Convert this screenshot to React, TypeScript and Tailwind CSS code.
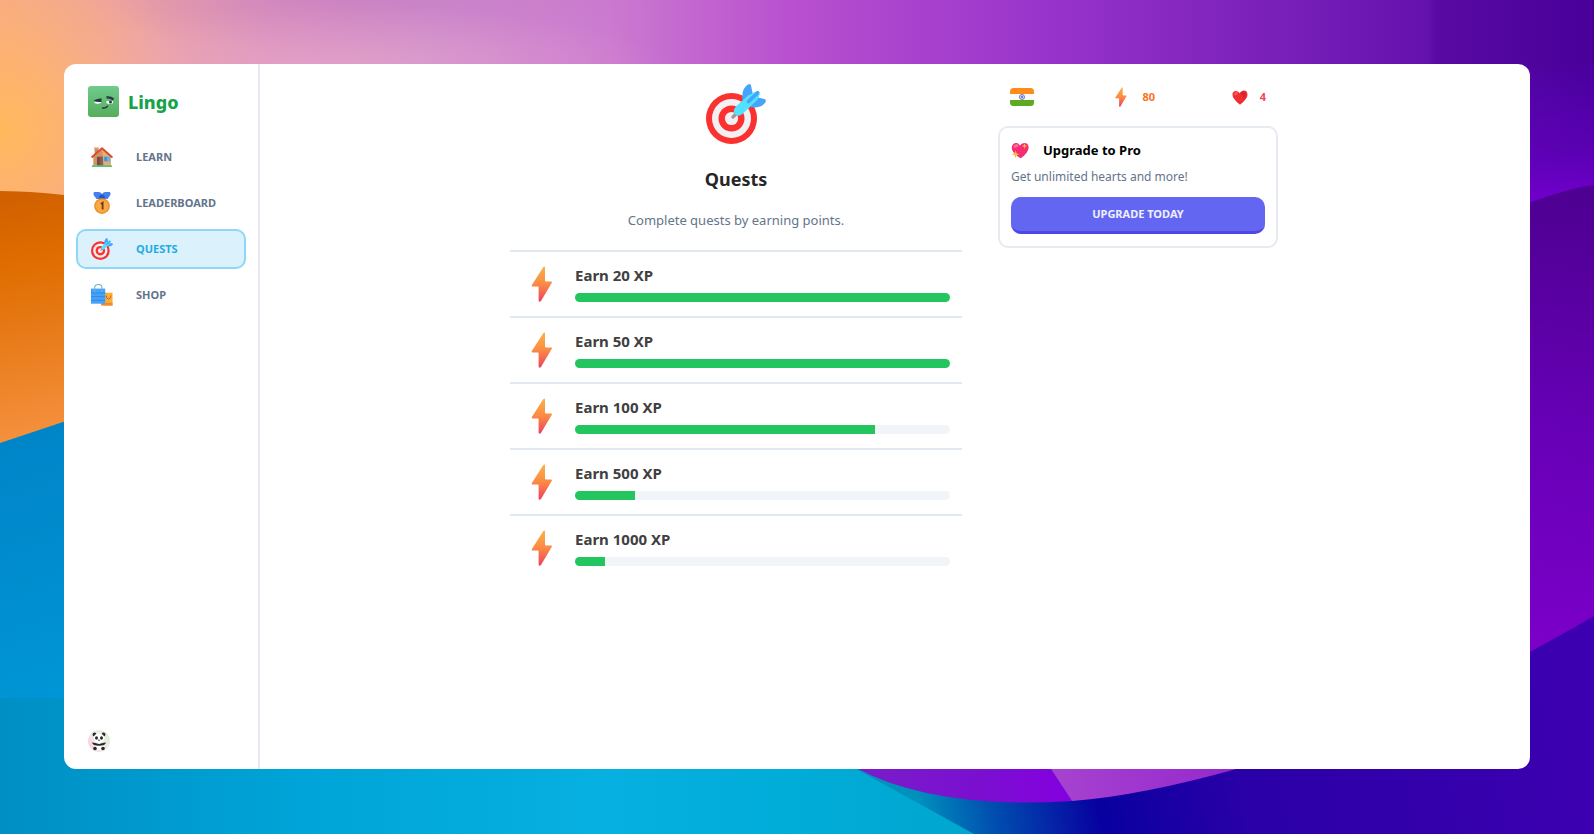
import React, { useId } from "react";

type IconProps = { className?: string };

function Wallpaper() {
  return (
    <svg
      className="absolute inset-0 h-full w-full"
      viewBox="0 0 1594 834"
      preserveAspectRatio="none"
      aria-hidden="true"
    >
      <defs>
        <linearGradient id="sky" x1="0" x2="1">
          <stop offset="0" stopColor="#f8aa80" />
          <stop offset=".08" stopColor="#eda4a0" />
          <stop offset=".17" stopColor="#dc94bd" />
          <stop offset=".27" stopColor="#d08fcb" />
          <stop offset=".38" stopColor="#cc7bd0" />
          <stop offset=".5" stopColor="#b84fcf" />
          <stop offset=".66" stopColor="#9733cb" />
          <stop offset=".8" stopColor="#7920b9" />
          <stop offset=".896" stopColor="#6511ae" />
          <stop offset=".9" stopColor="#5a0aa3" />
          <stop offset="1" stopColor="#48009a" />
        </linearGradient>
        <radialGradient id="glow" gradientUnits="userSpaceOnUse" cx="0" cy="130" r="200">
          <stop offset="0" stopColor="#ffb95c" />
          <stop offset=".35" stopColor="#ffb56a" stopOpacity=".75" />
          <stop offset="1" stopColor="#f8b090" stopOpacity="0" />
        </radialGradient>
        <radialGradient id="mauve" gradientUnits="userSpaceOnUse" cx="0" cy="0" r="1" gradientTransform="translate(360 -10) scale(300 65)">
          <stop offset="0" stopColor="#b868c0" stopOpacity=".4" />
          <stop offset="1" stopColor="#b868c0" stopOpacity="0" />
        </radialGradient>
        <radialGradient id="blush" gradientUnits="userSpaceOnUse" cx="0" cy="0" r="1" gradientTransform="translate(340 75) scale(340 70)">
          <stop offset="0" stopColor="#eeb0d0" stopOpacity=".45" />
          <stop offset="1" stopColor="#eeb0d0" stopOpacity="0" />
        </radialGradient>
        <linearGradient id="orange" gradientUnits="userSpaceOnUse" x1="0" y1="190" x2="50" y2="440">
          <stop offset="0" stopColor="#cf5f00" />
          <stop offset=".3" stopColor="#df6d00" />
          <stop offset="1" stopColor="#f5913f" />
        </linearGradient>
        <linearGradient id="blue" gradientUnits="userSpaceOnUse" x1="0" y1="450" x2="80" y2="700">
          <stop offset="0" stopColor="#0085c9" />
          <stop offset="1" stopColor="#0096d5" />
        </linearGradient>
        <linearGradient id="cyan" x1="0" x2="1">
          <stop offset="0" stopColor="#008fc4" />
          <stop offset=".3" stopColor="#00a4d8" />
          <stop offset=".6" stopColor="#06b0e0" />
          <stop offset=".8" stopColor="#00acd8" />
          <stop offset="1" stopColor="#00a5cc" />
        </linearGradient>
        <linearGradient id="dusk" gradientUnits="userSpaceOnUse" x1="0" y1="60" x2="0" y2="205">
          <stop offset="0" stopColor="#6400cf" stopOpacity="0" />
          <stop offset=".6" stopColor="#6400c0" stopOpacity=".6" />
          <stop offset="1" stopColor="#7300d0" />
        </linearGradient>
        <linearGradient id="violet" gradientUnits="userSpaceOnUse" x1="1594" y1="200" x2="1520" y2="640">
          <stop offset="0" stopColor="#4e0092" />
          <stop offset=".55" stopColor="#6800b8" />
          <stop offset="1" stopColor="#7b00c8" />
        </linearGradient>
        <linearGradient id="indigo" gradientUnits="userSpaceOnUse" x1="890" y1="860" x2="1594" y2="740">
          <stop offset=".05" stopColor="#0092bd" />
          <stop offset=".15" stopColor="#0050b0" />
          <stop offset=".3" stopColor="#0800a0" />
          <stop offset=".5" stopColor="#2a00a8" />
          <stop offset="1" stopColor="#3d00b0" />
        </linearGradient>
        <linearGradient id="petal" x1="0" x2="1">
          <stop offset="0" stopColor="#7820c8" />
          <stop offset=".6" stopColor="#7b0fd0" />
          <stop offset="1" stopColor="#8400e0" />
        </linearGradient>
        <linearGradient id="petalLight" x1="0" x2="1">
          <stop offset="0" stopColor="#a843d0" />
          <stop offset="1" stopColor="#9428cc" />
        </linearGradient>
      </defs>
      <rect width="1594" height="834" fill="url(#sky)" />
      <rect width="700" height="140" fill="url(#mauve)" />
      <rect width="700" height="140" fill="url(#blush)" />
      <rect width="300" height="240" fill="url(#glow)" />
      <path d="M1500 60H1594V250H1500Z" fill="url(#dusk)" />
      <path d="M0 191Q36 191 90 198V450H0Z" fill="url(#orange)" />
      <path d="M0 443Q30 433 90 413V834H0Z" fill="url(#blue)" />
      <path d="M0 698H90V760H1000V834H0Z" fill="url(#cyan)" />
      <path d="M1500 213Q1570 187 1594 185V700H1500Z" fill="url(#violet)" />
      <path d="M1500 668Q1560 636 1594 616V834H974L840 760H1500Z" fill="url(#indigo)" />
      <path d="M856 768Q935 810 1072 801L1045 760H840Z" fill="url(#petal)" />
      <path d="M1045 760L1072 801Q1140 796 1240 768V760Z" fill="url(#petalLight)" />
    </svg>
  );
}

function Bolt({ className }: IconProps) {
  const id = useId();
  return (
    <svg className={className} viewBox="0 0 36 36" aria-hidden="true">
      <defs>
        <linearGradient id={id} x1="0" y1="0" x2="0" y2="1">
          <stop offset="0" stopColor="#f9b146" />
          <stop offset=".5" stopColor="#fb8a45" />
          <stop offset="1" stopColor="#ee3f62" />
        </linearGradient>
      </defs>
      <path
        d="M19.200 1.200Q21-.2 21 1.400V14.600Q21 15.400 21.800 15.400H27Q28.600 15.400 27.800 16.800L17 35Q15.200 36.600 14.600 34.800V21.400Q14.600 20.400 13.600 20.400H8.600Q7.200 20.400 7.900 19Z"
        fill={`url(#${id})`}
      />
    </svg>
  );
}

function Target({ className }: IconProps) {
  return (
    <svg className={className} viewBox="0 0 60 60" aria-hidden="true">
      <circle cx="25.500" cy="34.500" r="25.500" fill="#fa312f" />
      <circle cx="25.500" cy="34.500" r="19.500" fill="#f3eff3" />
      <circle cx="25.500" cy="34.500" r="13" fill="#fa312f" />
      <circle cx="25.500" cy="34.500" r="6.600" fill="#f3eff3" />
      <path d="M27 33L32 28" stroke="#9b9b9b" strokeWidth="3.400" strokeLinecap="round" />
      <path d="M36.500 16C35.500 8 38 3 42 .5Q44-.6 45 1.500L47 11L37 21Z" fill="#46a4fb" />
      <path d="M44 23C52 24.500 57 22 59.600 18Q60.500 16 58.500 15L50 13Z" fill="#46a4fb" />
      <path d="M42 11.500L49 8Q54 5.500 53.800 9.500Q53 15 48 19L37 29.500Q32 33.500 29.500 30.500C26.500 27.500 28 25 30 22.500Z" fill="#50e2ff" />
      <path d="M42.500 17.500L51.500 9" stroke="#46a4fb" strokeWidth="3.600" strokeLinecap="round" />
    </svg>
  );
}

function House({ className }: IconProps) {
  return (
    <svg className={className} viewBox="0 0 24 24" aria-hidden="true">
      <path d="M4 2h4v9H4z" fill="#c98a55" />
      <path d="M3.500 1.500h5v2h-5z" fill="#e0a56a" />
      <path d="M2.500 11.500L12 3l9.500 8.500V21.500h-19z" fill="#cf9565" />
      <path d="M12 4l9.500 8v9.500H14z" fill="#e5ad78" />
      <path d="M6.500 11.800h6.500v9.800H6.500z" fill="#794b45" />
      <path d="M10 11.800h3v9.800h-3z" fill="#926052" />
      <path d="M14.500 11.800h5.500v4.800h-5.500z" fill="#2697e5" />
      <path d="M17.300 11.800H20v4.800h-2.700z" fill="#51bdf4" />
      <path d="M1.200 12L12 2.500 22.800 12" fill="none" stroke="#dc4931" strokeWidth="2" strokeLinecap="round" strokeLinejoin="round" />
      <path d="M1 21h22v2H1z" fill="#5bc374" />
    </svg>
  );
}

function Medal({ className }: IconProps) {
  return (
    <svg className={className} viewBox="0 0 24 24" aria-hidden="true">
      <path d="M3.500 0h5q2 0 3.500 2.200Q13.500 0 15.500 0h5q1.500 1.200.5 3.500L18 7.500H6L3 3.500Q2 1 3.500 0z" fill="#4580ee" />
      <path d="M8.500 5l3.500-2.500 3.500 2.500-1 3h-5z" fill="#2857c4" />
      <circle cx="12" cy="15.300" r="8.600" fill="#e9912f" />
      <circle cx="12" cy="15.300" r="7" fill="#fba83c" />
      <path d="M10.700 13l2-1.300v7.300" fill="none" stroke="#6d3a31" strokeWidth="2" />
    </svg>
  );
}

function Bags({ className }: IconProps) {
  return (
    <svg className={className} viewBox="0 0 24 24" aria-hidden="true">
      <path d="M13 9.500h10.500V23.500H13z" fill="#fbae36" />
      <path d="M11 20.500h12.500v3H11z" fill="#ee8b32" />
      <path d="M16.500 12.500q.5 4 2.500 4t3-4" fill="none" stroke="#a75c3e" strokeWidth=".9" />
      <path d="M0 5h15.500v16.500H0z" fill="#45a4fa" />
      <path d="M0 9.800h15.500M0 13.800h15.500M0 17.800h15.500" stroke="#2f85e8" strokeWidth="1" />
      <path d="M4 9V4.500q0-4 4-4t4 4V9" fill="none" stroke="#6fb4d2" strokeWidth="1.200" />
    </svg>
  );
}

function Heart({ className }: IconProps) {
  return (
    <svg className={className} viewBox="0 0 24 24" aria-hidden="true">
      <path d="M12 23.500Q1 15 .7 8.500C.5 2 8 1 11.500 6.500 15 0 23.500 1 23.300 8.500Q23 15 12 23.500z" fill="#f02f33" />
      <path d="M12 7.500Q16 2.500 19.500 4.500 23 9 17 17q2-7-5-9.500z" fill="#cf1e2b" opacity=".6" />
      <ellipse cx="6" cy="7" rx="3" ry="2" fill="#fb5c52" transform="rotate(-30 6 7)" />
    </svg>
  );
}

function SparkleHeart({ className }: IconProps) {
  return (
    <svg className={className} viewBox="0 0 24 24" aria-hidden="true">
      <path d="M13 23Q1 16 1 9C1 2 9 .5 12 6 16 .5 24 2 23.500 9Q23 16 13 23z" fill="#f52d70" />
      <ellipse cx="6.500" cy="6.500" rx="3.500" ry="2.200" fill="#fc6ba5" transform="rotate(-25 6.500 6.500)" />
      <path d="M18 3l1 2.800 2.800 1-2.800 1L18 10.600l-1-2.800-2.800-1 2.800-1z" fill="#fdb74b" />
      <path d="M6 12.500l1.400 3.700 3.700 1.400-3.700 1.400L6 22.700 4.600 19 .9 17.600l3.700-1.400z" fill="#fdb74b" />
    </svg>
  );
}

function Flag({ className }: IconProps) {
  return (
    <svg className={className} viewBox="0 0 24 18" role="img" aria-label="Hindi">
      <path d="M0 6V3.500Q0 0 3.500 0h17Q24 0 24 3.500V6z" fill="#ff8c1a" />
      <path d="M0 6h24v6H0z" fill="#fafafa" />
      <path d="M0 12h24v2.500q0 3.500-3.500 3.500h-17Q0 18 0 14.500z" fill="#5eaa22" />
      <circle cx="12" cy="9" r="2.500" fill="#d5d9f2" stroke="#5a6cc6" strokeWidth=".9" />
      <circle cx="12" cy="9" r=".9" fill="#4a5fc0" />
    </svg>
  );
}

function Mascot({ className }: IconProps) {
  return (
    <svg className={className} viewBox="0 0 31 31" aria-hidden="true">
      <defs>
        <linearGradient id="face" x1="0" y1="0" x2="0" y2="1">
          <stop offset="0" stopColor="#70cb8d" />
          <stop offset="1" stopColor="#55ad5b" />
        </linearGradient>
      </defs>
      <rect width="31" height="31" rx="3" fill="url(#face)" />
      <path d="M6.500 15.500H13v1.500q-3.500 1.600-6.500 0zM18.500 15H25v2.200q-3.200 1.500-6.500 0z" fill="#fff" />
      <path d="M5.500 14.500Q9 12.500 13.500 12.300V15.800Q9 16.800 5.500 14.500z" fill="#253846" />
      <path d="M18.500 11.500Q22.500 11 25.500 13.500" fill="none" stroke="#253846" strokeWidth="2.400" />
      <circle cx="22.500" cy="16" r="1.500" fill="#253846" />
      <path d="M14.500 22q3.500.5 5-1.800" fill="none" stroke="#253846" strokeWidth="1.500" strokeLinecap="round" />
    </svg>
  );
}

function Panda({ className }: IconProps) {
  return (
    <svg className={className} viewBox="0 0 24 24" role="img" aria-label="Account">
      <defs>
        <linearGradient id="avatar" x1="0" y1=".8" x2="1" y2=".2">
          <stop offset="0" stopColor="#f8cfdc" />
          <stop offset=".5" stopColor="#f3eceb" />
          <stop offset="1" stopColor="#d9efcf" />
        </linearGradient>
      </defs>
      <circle cx="12" cy="12" r="11" fill="url(#avatar)" />
      <circle cx="7.500" cy="5.500" r="1.900" fill="#2a2a2a" />
      <circle cx="16.500" cy="5.500" r="1.900" fill="#2a2a2a" />
      <ellipse cx="12" cy="9" rx="5.500" ry="4.600" fill="#fff" />
      <ellipse cx="9.500" cy="9" rx="1.500" ry="1.700" fill="#2a2a2a" />
      <ellipse cx="14.500" cy="9" rx="1.500" ry="1.700" fill="#2a2a2a" />
      <circle cx="12" cy="11.300" r=".8" fill="#2a2a2a" />
      <ellipse cx="12" cy="17" rx="4.500" ry="3.800" fill="#fff" />
      <path d="M5 13.500q3 0 7 1.500 4-1.500 7-1.500-1 3.500-7 3.300-6 .2-7-3.300z" fill="#2a2a2a" />
      <circle cx="8" cy="19.500" r="1.800" fill="#2a2a2a" />
      <circle cx="16" cy="19.500" r="1.800" fill="#2a2a2a" />
    </svg>
  );
}

const links = [
  { label: "Learn", Icon: House },
  { label: "Leaderboard", Icon: Medal },
  { label: "Quests", Icon: Target },
  { label: "Shop", Icon: Bags },
];

const points = 80;
const quests = [20, 50, 100, 500, 1000];

function Sidebar() {
  return (
    <aside className="flex w-[196px] shrink-0 flex-col border-r-2 border-[#e6ebf2] px-3 pb-4">
      <a href="#" className="flex items-center gap-[9px] pt-[22px] pb-5 pl-3">
        <Mascot className="size-[31px]" />
        <span className="text-[18px] leading-6 font-extrabold text-[#16a34a]">Lingo</span>
      </a>
      <nav className="flex flex-1 flex-col gap-1.5">
        {links.map(({ label, Icon }) => {
          const active = label === "Quests";
          return (
            <a
              key={label}
              href="#"
              aria-current={active ? "page" : undefined}
              className={
                active
                  ? "flex h-10 items-center gap-[23px] rounded-[10px] border-2 border-[#8fd6f7] bg-[#dbf1fc] px-[13px] text-[#1fabe3]"
                  : "flex h-10 items-center gap-[23px] rounded-[10px] border-2 border-transparent px-[13px] text-[#64748b]"
              }
            >
              <Icon className="size-[22px]" />
              <span className="text-[11px] leading-4 font-bold uppercase">{label}</span>
            </a>
          );
        })}
      </nav>
      <button type="button" className="ml-[11px] size-6 rounded-full">
        <Panda className="size-6" />
      </button>
    </aside>
  );
}

function QuestRow({ target }: { target: number }) {
  const progress = Math.min(100, (points / target) * 100);
  return (
    <li className="flex h-[66px] items-center gap-[13px] border-t-2 border-[#e2e8f0] px-3">
      <Bolt className="mx-0.5 size-9" />
      <div className="flex flex-1 flex-col gap-1.5 pb-1">
        <p className="text-[15px] leading-6 font-bold text-[#404040]">Earn {target} XP</p>
        <div
          role="progressbar"
          aria-label={`Earn ${target} XP`}
          aria-valuenow={progress}
          className="h-[9px] overflow-hidden rounded-full bg-[#f1f5f9]"
        >
          <div className="h-full bg-[#22c55e]" style={{ width: `${progress}%` }} />
        </div>
      </div>
    </li>
  );
}

export default function App() {
  return (
    <div className="relative flex min-h-screen px-16 pt-16 pb-[65px] font-['Noto_Sans',sans-serif]">
      <Wallpaper />
      <div className="relative flex flex-1 overflow-hidden rounded-xl bg-white">
        <Sidebar />
        <div className="flex flex-1 justify-center gap-9 pt-5 pr-[22px] pl-5">
          <main className="flex w-full max-w-[452px] flex-col items-center">
            <Target className="size-[60px]" />
            <h1 className="mt-[21px] text-[18px] leading-7 font-bold text-[#262626]">Quests</h1>
            <p className="mt-[17px] mb-5 text-[13px] leading-5 text-[#64748b]">
              Complete quests by earning points.
            </p>
            <ul className="w-full">
              {quests.map((target) => (
                <QuestRow key={target} target={target} />
              ))}
            </ul>
          </main>
          <aside className="w-[280px] shrink-0">
            <div className="flex h-[26px] items-center justify-between px-3">
              <Flag className="h-[18px] w-6" />
              <div className="flex items-center gap-3 text-[11px] font-bold text-[#f97316]">
                <Bolt className="size-5" />
                {points}
              </div>
              <div className="flex items-center gap-3 text-[11px] font-bold text-[#f43f5e]">
                <Heart className="size-4" />4
              </div>
            </div>
            <section className="mt-4 rounded-[10px] border-2 border-[#e6ebf2] px-[11px] py-3">
              <h2 className="flex items-center gap-[14px] text-[13px] leading-5 font-bold text-black">
                <SparkleHeart className="size-[18px]" />
                Upgrade to Pro
              </h2>
              <p className="mt-[9px] mb-3 text-[12px] leading-4 text-[#64748b]">Get unlimited hearts and more!</p>
              <button
                type="button"
                className="h-[37px] w-full rounded-[10px] border-b-[3px] border-[#4f46e5] bg-[#6366f1] text-[11px] font-bold text-white/90 uppercase"
              >
                Upgrade today
              </button>
            </section>
          </aside>
        </div>
      </div>
    </div>
  );
}
